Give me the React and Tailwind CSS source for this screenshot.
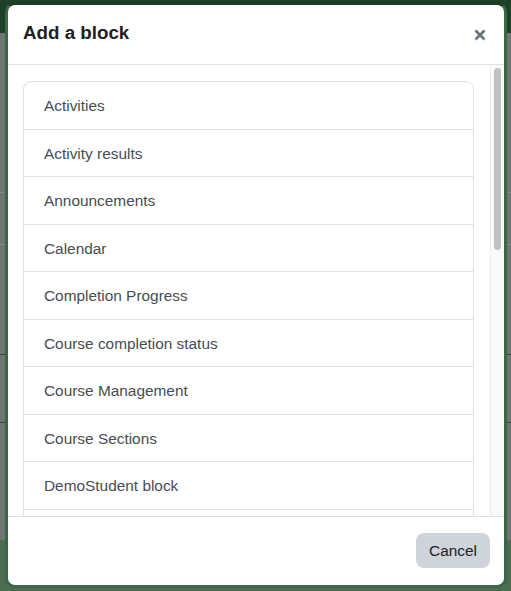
import React from "react";

const blocks = [
  "Activities",
  "Activity results",
  "Announcements",
  "Calendar",
  "Completion Progress",
  "Course completion status",
  "Course Management",
  "Course Sections",
  "DemoStudent block",
  "Feedback",
];

function App() {
  return (
    <div
      className="relative w-[511px] h-[591px] overflow-hidden bg-[#6f7671]"
      style={{ fontFamily: '"Liberation Sans", Arial, sans-serif' }}
    >
      {/* backdrop: dimmed page behind the dialog */}
      <div className="flex flex-col h-full">
        <div className="h-[33px] bg-[#1c4128]" />
        <div className="flex-1 flex flex-col">
          <div className="h-[160px] border-b border-[#7e8a81]" />
          <div className="h-[52px] border-b border-[#7e8a81]" />
          <div className="h-[110px] border-b border-[#2f4a35]" />
          <div className="h-[68px] border-b border-[#2f4a35]" />
          <div className="flex-1" />
        </div>
        <div className="h-[51px] bg-[#4c6d51]" />
      </div>

      {/* dialog */}
      <div className="absolute left-[5px] top-[2px] w-[502px] h-[586px] rounded-[10px] border-[3px] border-[#3a6744] border-t-[#1b3f25] bg-white flex flex-col overflow-hidden">
        <div className="h-[60px] shrink-0 flex items-center justify-between pl-[15px] pr-[18px] pb-[2px] border-b border-[#dee2e6]">
          <h5 className="text-[18.75px] font-bold text-[#1d2125]">Add a block</h5>
          <svg width="12" height="12" viewBox="0 0 12 12" className="mt-[2px]">
            <path d="M1.5 1.5 L10.5 10.5 M10.5 1.5 L1.5 10.5" stroke="#6a737b" strokeWidth="2.6" strokeLinecap="butt" />
          </svg>
        </div>

        <div className="flex-1 flex min-h-0">
          <div className="flex-1 overflow-hidden pt-[16px] pl-[15px] pr-[16px]">
            <div className="border border-[#dee2e6] rounded-[8px]">
              {blocks.map((b) => (
                <div
                  key={b}
                  className="h-[47.5px] flex items-center pl-[20px] pt-[1px] border-b border-[#dee2e6] text-[15.4px] text-[#474d53]"
                >
                  {b}
                </div>
              ))}
            </div>
          </div>
          <div className="w-[14px] shrink-0 border-l border-[#ebedef] bg-[#fafafa] pt-[3px] px-[3px]">
            <div className="h-[182px] rounded-full bg-[#c1c1c1]" />
          </div>
        </div>

        <div className="h-[69px] shrink-0 border-t border-[#dee2e6] flex items-center justify-end pr-[14px] pb-[1px]">
          <button className="h-[35px] px-[13px] pt-[1px] rounded-[8px] bg-[#ced4da] text-[15.4px] text-[#1d2125]">
            Cancel
          </button>
        </div>
      </div>
    </div>
  );
}

export default App;
